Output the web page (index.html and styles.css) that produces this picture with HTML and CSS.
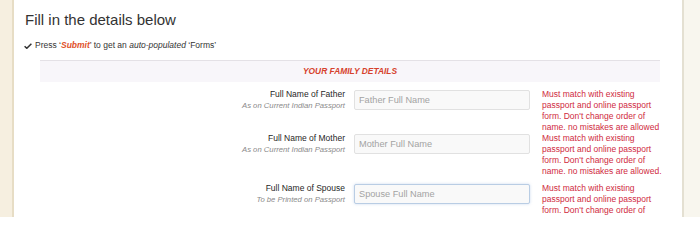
FILE: index.html
```html
<!DOCTYPE html>
<html lang="en">
<head>
<meta charset="utf-8">
<title>Fill in the details below</title>
<link rel="stylesheet" href="styles.css">
</head>
<body>
<div class="page">
  <div class="side-left"></div>
  <main class="main">
    <h1 class="title">Fill in the details below</h1>
    <p class="hint"><svg class="check" width="8" height="6" viewBox="0 0 8 6"><path d="M0.6 3.2 L2.8 5.3 L7.4 0.7" fill="none" stroke="#333" stroke-width="1.5"/></svg>Press &lsquo;<b class="submit">Submit</b>&rsquo; to get an <i>auto-populated</i> &lsquo;Forms&rsquo;</p>
    <section class="form">
      <div class="band">YOUR FAMILY DETAILS</div>
      <div class="row">
        <div class="label">
          <div class="label-main">Full Name of Father</div>
          <div class="label-sub">As on Current Indian Passport</div>
        </div>
        <input class="field" type="text" placeholder="Father Full Name">
        <div class="note">Must match with existing passport and online passport form. Don't change order of name. no mistakes are allowed</div>
      </div>
      <div class="row row-spaced">
        <div class="label">
          <div class="label-main">Full Name of Mother</div>
          <div class="label-sub">As on Current Indian Passport</div>
        </div>
        <input class="field" type="text" placeholder="Mother Full Name">
        <div class="note">Must match with existing passport and online passport form. Don't change order of name. no mistakes are allowed.</div>
      </div>
      <div class="row">
        <div class="label">
          <div class="label-main">Full Name of Spouse</div>
          <div class="label-sub">To be Printed on Passport</div>
        </div>
        <input class="field field-focus" type="text" placeholder="Spouse Full Name">
        <div class="note">Must match with existing passport and online passport form. Don't change order of name. no mistakes are allowed.</div>
      </div>
    </section>
  </main>
  <div class="side-right"></div>
</div>
</body>
</html>
```

FILE: styles.css
```css
html, body {
  margin: 0;
  padding: 0;
  background: #ffffff;
}
body {
  font-family: "Liberation Sans", Arial, sans-serif;
  color: #333;
}
.page {
  display: flex;
  height: 217px;
  overflow: hidden;
}
.side-left {
  width: 12px;
  flex: none;
  background: #f6efe0;
  border-right: 2px solid #e7ddc5;
}
.side-right {
  width: 16px;
  flex: none;
  background: #f8f6ee;
  border-left: 2px solid #e4e0d2;
}
.main {
  flex: 1;
  background: #fff;
  min-width: 0;
}
.title {
  margin: 0;
  padding: 10px 0 0 11px;
  font-size: 15px;
  line-height: 19px;
  font-weight: normal;
  color: #333;
}
.hint {
  margin: 10px 0 0 10px;
  font-size: 8.5px;
  line-height: 12px;
  color: #333;
  white-space: nowrap;
}
.check {
  margin-right: 3px;
  vertical-align: -0.5px;
}
.submit {
  color: #e0512b;
  font-style: italic;
}
.form {
  margin: 9px 22px 0 26px;
}
.band {
  height: 21px;
  line-height: 21px;
  border-top: 1px solid #e4e1e6;
  background: #f8f6fa;
  text-align: center;
  font-size: 8.4px;
  font-weight: bold;
  font-style: italic;
  color: #d6412c;
}
.row {
  display: flex;
  align-items: flex-start;
}
.band + .row {
  margin-top: 7px;
}
.row-spaced {
  margin-bottom: 6px;
}
.label {
  width: 305px;
  flex: none;
  text-align: right;
  line-height: 11px;
}
.label-main {
  font-size: 8.5px;
  color: #1f1f1f;
}
.label-sub {
  font-size: 7.7px;
  font-style: italic;
  color: #8a8a8a;
}
.field {
  box-sizing: border-box;
  width: 176px;
  height: 20px;
  flex: none;
  margin: 1px 0 0 9px;
  padding: 0 4px;
  border: 1px solid #e1e1e1;
  border-radius: 2px;
  background: #f9f9f9;
  font-family: "Liberation Sans", Arial, sans-serif;
  font-size: 9.2px;
  color: #333;
  outline: none;
}
.field::placeholder {
  color: #a3a3a3;
}
.field-focus {
  border-color: #b9cde4;
  box-shadow: 0 0 3px rgba(110, 150, 210, 0.35);
}
.note {
  width: 126px;
  height: 44px;
  flex: none;
  margin-left: 12px;
  font-size: 8.5px;
  line-height: 11px;
  color: #cf2a3e;
}
```
